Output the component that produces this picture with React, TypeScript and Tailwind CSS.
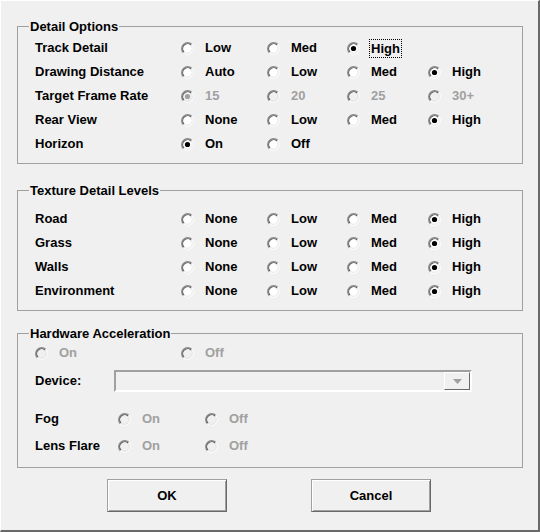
import React from "react";

type Opt = { label: string; checked?: boolean; disabled?: boolean; focus?: boolean };

const Radio = ({ checked, disabled }: { checked?: boolean; disabled?: boolean }) => (
  <svg width="13" height="13" viewBox="0 0 13 13" className="shrink-0">
    <circle cx="6.5" cy="6.5" r="5.5" fill={disabled ? "#f0f0f0" : "#ffffff"} />
    <path d="M 2.26 10.74 A 6 6 0 0 1 10.74 2.26" fill="none" stroke="#8a8a8a" strokeWidth="1.2" />
    <path d="M 2.97 10.03 A 5 5 0 0 1 10.03 2.97" fill="none" stroke="#5a5a5a" strokeWidth="1.1" />
    <path d="M 10.74 2.26 A 6 6 0 0 1 2.26 10.74" fill="none" stroke="#ffffff" strokeWidth="1" />
    <path d="M 10.03 2.97 A 5 5 0 0 1 2.97 10.03" fill="none" stroke="#e3e3e3" strokeWidth="1" />
    {checked && <circle cx="6.5" cy="6.5" r="2.6" fill={disabled ? "#a0a0a0" : "#000000"} />}
  </svg>
);

const Option = ({ opt, w }: { opt: Opt; w: string }) => (
  <div className={"flex items-center " + w}>
    <Radio checked={opt.checked} disabled={opt.disabled} />
    {opt.focus ? (
      <span className="ml-[9px] px-px leading-[17px] border border-dotted border-black">{opt.label}</span>
    ) : (
      <span className={"ml-[11px] " + (opt.disabled ? "text-[#a0a0a0]" : "")}>{opt.label}</span>
    )}
  </div>
);

const Group = ({ title, className, children }: { title: string; className: string; children: React.ReactNode }) => (
  <div className={"relative w-[506px] border border-[#a0a0a0] " + className}>
    <span className="absolute left-[11px] -top-[8px] px-px bg-[#f0f0f0] leading-[16px]">{title}</span>
    {children}
  </div>
);

const Row = ({ label, opts }: { label: string; opts: Opt[] }) => (
  <div className="flex h-[24px] items-center">
    <div className="w-[163px] pl-[17px]">{label}</div>
    <Option opt={opts[0]} w="w-[86px]" />
    <Option opt={opts[1]} w="w-[80px]" />
    {opts[2] && <Option opt={opts[2]} w="w-[81px]" />}
    {opts[3] && <Option opt={opts[3]} w="" />}
  </div>
);

const nlmh = (c: number): Opt[] =>
  ["None", "Low", "Med", "High"].map((l, i) => ({ label: l, checked: i === c }));

const Button = ({ label }: { label: string }) => (
  <button className="w-[120px] h-[33px] bg-[#f0f0f0] border border-t-[#a0a0a0] border-l-[#a0a0a0] border-b-[#696969] border-r-[#696969] shadow-[inset_1px_1px_0_#ffffff,inset_-1px_-1px_0_#a0a0a0] font-bold">
    {label}
  </button>
);

export default function App() {
  return (
    <div className="w-[540px] h-[532px] overflow-hidden bg-[#f0f0f0] border-t border-l border-t-white border-l-white border-r-2 border-b-2 border-r-[#696969] border-b-[#696969] pl-[16px] pt-[25px] text-[13px] font-bold text-black font-['Liberation_Sans',Arial,sans-serif]">
      <Group title="Detail Options" className="pt-[9px] pb-[7px]">
        <Row
          label="Track Detail"
          opts={[{ label: "Low" }, { label: "Med" }, { label: "High", checked: true, focus: true }]}
        />
        <Row
          label="Drawing Distance"
          opts={[{ label: "Auto" }, { label: "Low" }, { label: "Med" }, { label: "High", checked: true }]}
        />
        <Row
          label="Target Frame Rate"
          opts={[
            { label: "15", checked: true, disabled: true },
            { label: "20", disabled: true },
            { label: "25", disabled: true },
            { label: "30+", disabled: true },
          ]}
        />
        <Row
          label="Rear View"
          opts={[{ label: "None" }, { label: "Low" }, { label: "Med" }, { label: "High", checked: true }]}
        />
        <Row label="Horizon" opts={[{ label: "On", checked: true }, { label: "Off" }]} />
      </Group>

      <Group title="Texture Detail Levels" className="mt-[26px] pt-[16px] pb-[7px]">
        <Row label="Road" opts={nlmh(3)} />
        <Row label="Grass" opts={nlmh(3)} />
        <Row label="Walls" opts={nlmh(3)} />
        <Row label="Environment" opts={nlmh(3)} />
      </Group>

      <Group title="Hardware Acceleration" className="mt-[22px] pt-[7px] pb-[9px]">
        <div className="flex h-[24px] items-center pl-[17px]">
          <Option opt={{ label: "On", disabled: true }} w="w-[146px]" />
          <Option opt={{ label: "Off", disabled: true }} w="" />
        </div>
        <div className="flex h-[22px] items-center mt-[5px]">
          <div className="w-[96px] pl-[17px]">Device:</div>
          <div className="w-[358px] h-[22px] flex justify-end bg-[#f0f0f0] border-2 border-t-[#a0a0a0] border-l-[#a0a0a0] border-b-white border-r-white">
            <div className="w-[26px] h-full flex items-center justify-center border border-t-white border-l-white border-b-[#696969] border-r-[#696969]">
              <svg width="9" height="5" viewBox="0 0 9 5">
                <path d="M0 0 H9 L4.5 5 Z" fill="#a0a0a0" />
              </svg>
            </div>
          </div>
        </div>
        <div className="flex h-[24px] items-center mt-[15px]">
          <div className="w-[100px] pl-[17px]">Fog</div>
          <Option opt={{ label: "On", disabled: true }} w="w-[87px]" />
          <Option opt={{ label: "Off", disabled: true }} w="" />
        </div>
        <div className="flex h-[24px] items-center mt-[3px]">
          <div className="w-[100px] pl-[17px]">Lens Flare</div>
          <Option opt={{ label: "On", disabled: true }} w="w-[87px]" />
          <Option opt={{ label: "Off", disabled: true }} w="" />
        </div>
      </Group>

      <div className="flex mt-[11px] ml-[90px] gap-[84px]">
        <Button label="OK" />
        <Button label="Cancel" />
      </div>
    </div>
  );
}
